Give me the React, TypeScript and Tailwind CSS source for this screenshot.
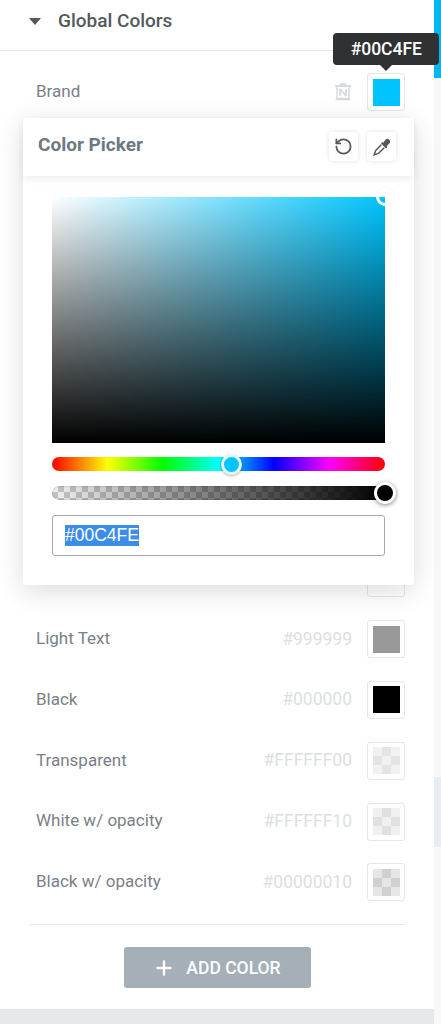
import type { ReactNode } from "react";
import { Plus, RotateCcw } from "lucide-react";

const colors = [
  { name: "Light Text", hex: "#999999", swatch: "bg-[#999999]" },
  { name: "Black", hex: "#000000", swatch: "bg-black" },
  {
    name: "Transparent",
    hex: "#FFFFFF00",
    swatch: "bg-[conic-gradient(#e4e4e4_25%,#f1f1f1_0_50%,#e4e4e4_0_75%,#f1f1f1_0)] bg-[length:18px_18px]",
  },
  {
    name: "White w/ opacity",
    hex: "#FFFFFF10",
    swatch: "bg-[conic-gradient(#e0e0e0_25%,#f0f0f0_0_50%,#e0e0e0_0_75%,#f0f0f0_0)] bg-[length:18px_18px]",
  },
  {
    name: "Black w/ opacity",
    hex: "#00000010",
    swatch: "bg-[conic-gradient(#d0d0d0_25%,#e6e6e6_0_50%,#d0d0d0_0_75%,#e6e6e6_0)] bg-[length:18px_18px]",
  },
];

function SwatchBox({ children }: { children?: ReactNode }) {
  return (
    <div className="flex h-[38px] w-[38px] shrink-0 items-center justify-center rounded-[3px] border border-[#e4e6e9] bg-white">
      {children}
    </div>
  );
}

function TrashIcon() {
  return (
    <svg viewBox="0 0 18 18" className="h-[18px] w-[18px]" fill="none" stroke="#d5d8dc" strokeWidth="1.4">
      <path d="M6.5 2.5V1h5v1.5" />
      <path d="M1 3h16" strokeWidth="1.8" />
      <path d="M3 3v12.5h12V3" />
      <path d="M1.5 16.5h15" />
      <path d="M6 6v7M12 6v7M6 6l6 7" strokeWidth="1.6" />
    </svg>
  );
}

function PipetteIcon() {
  return (
    <svg viewBox="0 0 16 16" className="h-[18px] w-[18px]" fill="none">
      <path
        d="M11 1.6a2.3 2.3 0 0 1 3.4 3.4l-2.2 2.2.7.7-1.4 1.4-4.4-4.4 1.4-1.4.7.7z"
        fill="#54595f"
      />
      <path d="M7.4 6 2.6 10.8c-.5.5-.6 1.1-.7 1.6L1 15l2.6-.9c.5-.1 1.1-.2 1.6-.7L10 8.6" stroke="#54595f" strokeWidth="1.3" />
    </svg>
  );
}

export default function App() {
  return (
    <div className="relative h-[1024px] w-[441px] overflow-hidden bg-white font-['Roboto',sans-serif]">
      <div className="flex h-full">
        {/* panel */}
        <div className="flex w-[434px] shrink-0 flex-col">
          <div className="flex h-[51px] items-center gap-[17px] border-b border-[#e8e9eb] pb-[8px] pl-[29px]">
            <div className="h-0 w-0 border-x-[6px] border-t-[7px] border-x-transparent border-t-[#54595f]" />
            <span className="text-[19px] font-medium text-[#54595f]">Global Colors</span>
          </div>

          <div className="flex flex-col gap-[22.8px] pl-[36px] pr-[29px] pt-[22px]">
            <div className="flex h-[38px] items-center justify-between">
              <span className="pb-[1px] text-[17px] text-[#7a8087]">Brand</span>
              <div className="flex items-center gap-[15px]">
                <TrashIcon />
                <SwatchBox>
                  <div className="h-[27px] w-[27px] bg-[#00c4fe]" />
                </SwatchBox>
              </div>
            </div>

            {/* rows covered by the picker */}
            {Array.from({ length: 8 }).map((_, i) => (
              <div key={i} className="flex h-[38px] items-center justify-end">
                <SwatchBox />
              </div>
            ))}

            {colors.map((c) => (
              <div key={c.name} className="flex h-[38px] items-center justify-between">
                <span className="pb-[1px] text-[17px] text-[#7a8087]">{c.name}</span>
                <div className="flex items-center gap-[15px]">
                  <span className="pb-[1px] text-[17.5px] text-[#dcdfe2]">{c.hex}</span>
                  <SwatchBox>
                    <div className={`h-[27px] w-[27px] ${c.swatch}`} />
                  </SwatchBox>
                </div>
              </div>
            ))}
          </div>

          <div className="mx-[29px] mt-[23px] border-t border-[#e8e9eb]" />
          <div className="flex justify-center pt-[22px]">
            <button className="flex h-[41px] w-[187px] items-center justify-center gap-[11px] rounded-[3px] bg-[#a4afb7] text-[17.5px] font-medium text-white">
              <Plus className="h-[22px] w-[22px]" strokeWidth={2.7} />
              ADD COLOR
            </button>
          </div>
          <div className="mt-auto h-[15px] bg-[#e6e9ec]" />
        </div>

        {/* scrollbar strip */}
        <div className="flex w-[7px] flex-col bg-[#f8f8f8]">
          <div className="h-[78px] bg-[#00b7f1]" />
          <div className="mt-[699px] h-[70px] bg-[#e9edf1]" />
        </div>
      </div>

      {/* tooltip */}
      <div className="absolute left-[333px] top-[33px] flex h-[32px] w-[106px] items-center justify-end rounded-[4px] bg-[#2f3133] pr-[17px] text-[17.5px] font-medium text-white">
        #00C4FE
        <div className="absolute left-[47px] top-[32px] h-0 w-0 border-x-[6px] border-t-[6px] border-x-transparent border-t-[#2f3133]" />
      </div>

      {/* color picker */}
      <div className="absolute left-[23px] top-[118px] h-[467px] w-[391px] rounded-[3px] bg-white shadow-[0_6px_28px_rgba(0,0,0,0.14)]">
        <div className="flex h-[58px] items-center justify-between pl-[15px] pr-[18px] shadow-[0_3px_8px_rgba(0,0,0,0.07)]">
          <span className="mb-[3px] text-[19px] font-bold text-[#6d7882]">Color Picker</span>
          <div className="mb-[1px] flex gap-[9px]">
            <div className="flex h-[29px] w-[29px] items-center justify-center rounded-[4px] bg-white shadow-[0_0_5px_rgba(0,0,0,0.12)]">
              <RotateCcw className="h-[19px] w-[19px] text-[#54595f]" strokeWidth={2.2} />
            </div>
            <div className="flex h-[29px] w-[29px] items-center justify-center rounded-[4px] bg-white shadow-[0_0_5px_rgba(0,0,0,0.12)]">
              <PipetteIcon />
            </div>
          </div>
        </div>

        <div className="flex flex-col px-[29px] pt-[21px]">
          {/* saturation square */}
          <div className="relative h-[246px] w-[333px] bg-[linear-gradient(to_top,#000,transparent),linear-gradient(to_right,#fff,#00c4fe)]">
            <div className="absolute -top-[9px] left-[324px] h-[18px] w-[18px] rounded-full border-[3px] border-white shadow-[0_0_2px_rgba(0,0,0,0.12)]" />
          </div>

          {/* hue */}
          <div className="relative mt-[14px] h-[14px] w-[333px] rounded-full bg-[linear-gradient(to_right,#f00,#ff0,#0f0,#0ff,#00f,#f0f,#f00)]">
            <div className="absolute -top-[3px] left-[169px] h-[21px] w-[21px] rounded-full border-[3px] border-[#e6f7fd] bg-[#00c4fe] shadow-[0_1px_3px_rgba(0,0,0,0.3)]" />
          </div>

          {/* alpha */}
          <div className="relative mt-[15px] h-[14px] w-[333px] rounded-full bg-[linear-gradient(to_right,rgba(0,0,0,0),#000),conic-gradient(#c4c4c4_25%,#f0f0f0_0_50%,#c4c4c4_0_75%,#f0f0f0_0)] bg-[length:100%_100%,12px_12px] shadow-[inset_0_0_2px_rgba(0,0,0,0.35)]">
            <div className="absolute -top-[4px] left-[322px] h-[22px] w-[22px] rounded-full border-[3px] border-white bg-black shadow-[0_1px_4px_rgba(0,0,0,0.5)]" />
          </div>

          {/* hex input */}
          <div className="mt-[15px] flex h-[41px] w-[333px] items-center rounded-[3px] border border-[#a8a8a8] pl-[12px]">
            <span className="bg-[#3b8de8] font-['Liberation_Sans',sans-serif] text-[17.5px] leading-[21px] text-white">#00C4FE</span>
          </div>
        </div>
      </div>
    </div>
  );
}
